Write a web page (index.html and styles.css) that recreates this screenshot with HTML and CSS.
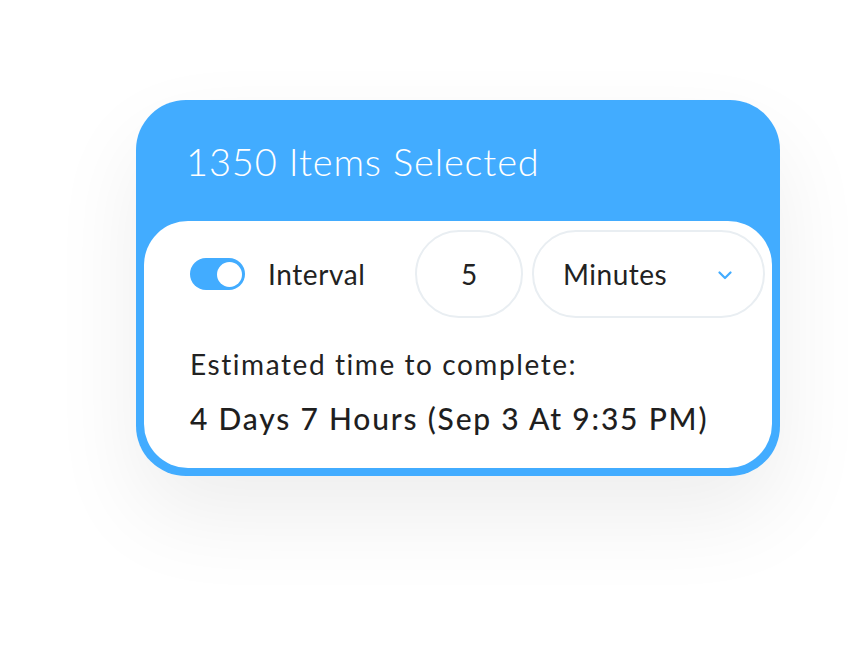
FILE: index.html
```html
<!DOCTYPE html>
<html>
<head>
<meta charset="utf-8">
<link rel="stylesheet" href="styles.css">
</head>
<body>
<div class="stage">
  <div class="card">
    <div class="card-header">1350 Items Selected</div>
    <div class="panel">
      <div class="controls">
        <div class="toggle"><span class="knob"></span></div>
        <span class="label">Interval</span>
        <div class="pill num">5</div>
        <div class="pill select">
          <span>Minutes</span>
          <svg class="chev" width="14" height="9" viewBox="0 0 14 9"><path d="M1.5 1.5 L7 7 L12.5 1.5" fill="none" stroke="#42acff" stroke-width="2.2" stroke-linecap="round" stroke-linejoin="round"/></svg>
        </div>
      </div>
      <div class="est-label">Estimated time to complete:</div>
      <div class="est-value">4 Days 7 Hours (Sep 3 At 9:35 PM)</div>
    </div>
  </div>
</div>
</body>
</html>
```
FILE: styles.css
```css
html, body {
  margin: 0;
  padding: 0;
  background: #ffffff;
}
body {
  width: 848px;
  height: 649px;
  overflow: hidden;
  font-family: "Lato", "Open Sans", sans-serif;
  color: #222222;
}
.stage {
  padding: 100px 0 0 136px;
}
.card {
  width: 644px;
  height: 376px;
  box-sizing: border-box;
  background: #42acff;
  border-radius: 50px;
  box-shadow: 0 40px 90px rgba(0, 0, 0, 0.07);
  display: flex;
  flex-direction: column;
}
.card-header {
  height: 121px;
  box-sizing: border-box;
  padding: 39px 0 0 50px;
  color: #ffffff;
  font-size: 38px;
  font-weight: 300;
  line-height: 44px;
  letter-spacing: 0.85px;
}
.panel {
  flex: 1;
  margin: 0 8px 8px 8px;
  background: #ffffff;
  border-radius: 44px;
  padding: 9px 7px 0 46px;
}
.controls {
  display: flex;
  align-items: center;
  height: 88px;
}
.toggle {
  flex: none;
  width: 55px;
  height: 32px;
  border-radius: 16px;
  background: #42acff;
  display: flex;
  align-items: center;
  justify-content: flex-end;
  padding-right: 3px;
  box-sizing: border-box;
}
.knob {
  width: 25px;
  height: 25px;
  border-radius: 50%;
  background: #ffffff;
}
.label {
  flex: none;
  margin-left: 23px;
  font-size: 28px;
  font-weight: 400;
  width: 147px;
  letter-spacing: 0.6px;
}
.pill {
  flex: none;
  height: 88px;
  box-sizing: border-box;
  border: 2px solid #e9eef2;
  border-radius: 44px;
  display: flex;
  align-items: center;
  font-size: 28px;
}
.num {
  width: 108px;
  justify-content: center;
}
.select {
  width: 233px;
  margin-left: 9px;
  padding: 0 31px 0 29px;
  justify-content: space-between;
  letter-spacing: 0.5px;
}
.chev {
  margin-top: 2px;
}
.est-label {
  margin-top: 29px;
  font-size: 28px;
  font-weight: 400;
  line-height: 34px;
  letter-spacing: 1.57px;
}
.est-value {
  margin-top: 19px;
  font-size: 30px;
  font-weight: 500;
  line-height: 36px;
  letter-spacing: 1.8px;
  color: #1f1f1f;
}
```
